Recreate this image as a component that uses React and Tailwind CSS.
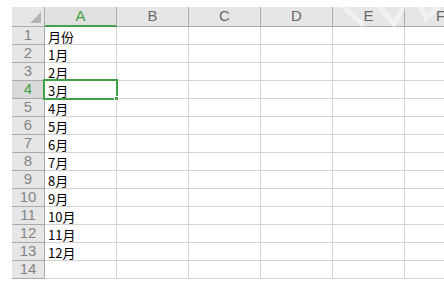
const cols = ["A", "B", "C", "D", "E", "F"];
const rows = ["月份", "1月", "2月", "3月", "4月", "5月", "6月", "7月", "8月", "9月", "10月", "11月", "12月", ""];

export default function App() {
  return (
    <div className="relative h-[282px] w-[444px] overflow-hidden bg-white pl-[12px] pt-[7px] font-['Noto_Sans_CJK_SC',sans-serif]">
      {/* faint watermark in the top right */}
      <svg className="pointer-events-none absolute right-0 top-0 z-20" width="110" height="30" viewBox="0 0 110 30">
        <path d="M2 0 L30 26" stroke="#ffffff" strokeOpacity="0.45" strokeWidth="5" fill="none" />
        <path d="M40 0 L60 24 L70 6" stroke="#ffffff" strokeOpacity="0.45" strokeWidth="5" fill="none" />
        <path d="M84 0 L92 18 L108 4" stroke="#ffffff" strokeOpacity="0.45" strokeWidth="5" fill="none" />
      </svg>

      <div className="grid grid-cols-[33px_72px_72px_72px_72px_72px_72px] grid-rows-[20px_repeat(14,18px)]">
        {/* corner */}
        <div className="relative border-b border-r border-[#ababab] bg-[#e6e6e6]">
          <div className="absolute bottom-[3px] right-[3px] h-0 w-0 border-b-[11px] border-l-[11px] border-b-[#b4b4b4] border-l-transparent" />
        </div>
        {cols.map((c) => (
          <div
            key={c}
            className={
              c === "A"
                ? "flex items-center justify-center border-b-2 border-r border-b-[#43a047] border-r-[#ababab] bg-[#e0e0e0] text-[15px] text-[#43a047] font-['Liberation_Sans',sans-serif]"
                : "flex items-center justify-center border-b border-r border-[#ababab] bg-[#e6e6e6] text-[15px] text-[#6a6a6a] font-['Liberation_Sans',sans-serif]"
            }
          >
            {c}
          </div>
        ))}

        {rows.map((text, i) => {
          const sel = i === 3;
          return [
            <div
              key={"h" + i}
              className={
                sel
                  ? "flex items-center justify-center border-b border-r border-[#ababab] bg-[#d9d9d9] text-[15px] text-[#43a047] font-['Liberation_Sans',sans-serif]"
                  : "flex items-center justify-center border-b border-r border-[#ababab] bg-[#e6e6e6] text-[15px] text-[#858585] font-['Liberation_Sans',sans-serif]"
              }
            >
              {i + 1}
            </div>,
            ...cols.map((c) => (
              <div key={c + i} className="relative border-b border-r border-[#d4d4d4] pl-[3px] pt-[1px] text-[13px] leading-[17px] text-black">
                {c === "A" ? text : ""}
                {c === "A" && sel && (
                  <div className="absolute -left-[2px] -top-[2px] z-10 h-[21px] w-[75px] border-2 border-[#43a047]">
                    <div className="absolute -bottom-[3px] -right-[3px] h-[5px] w-[5px] border border-white bg-[#43a047]" />
                  </div>
                )}
              </div>
            )),
          ];
        })}
      </div>
    </div>
  );
}
